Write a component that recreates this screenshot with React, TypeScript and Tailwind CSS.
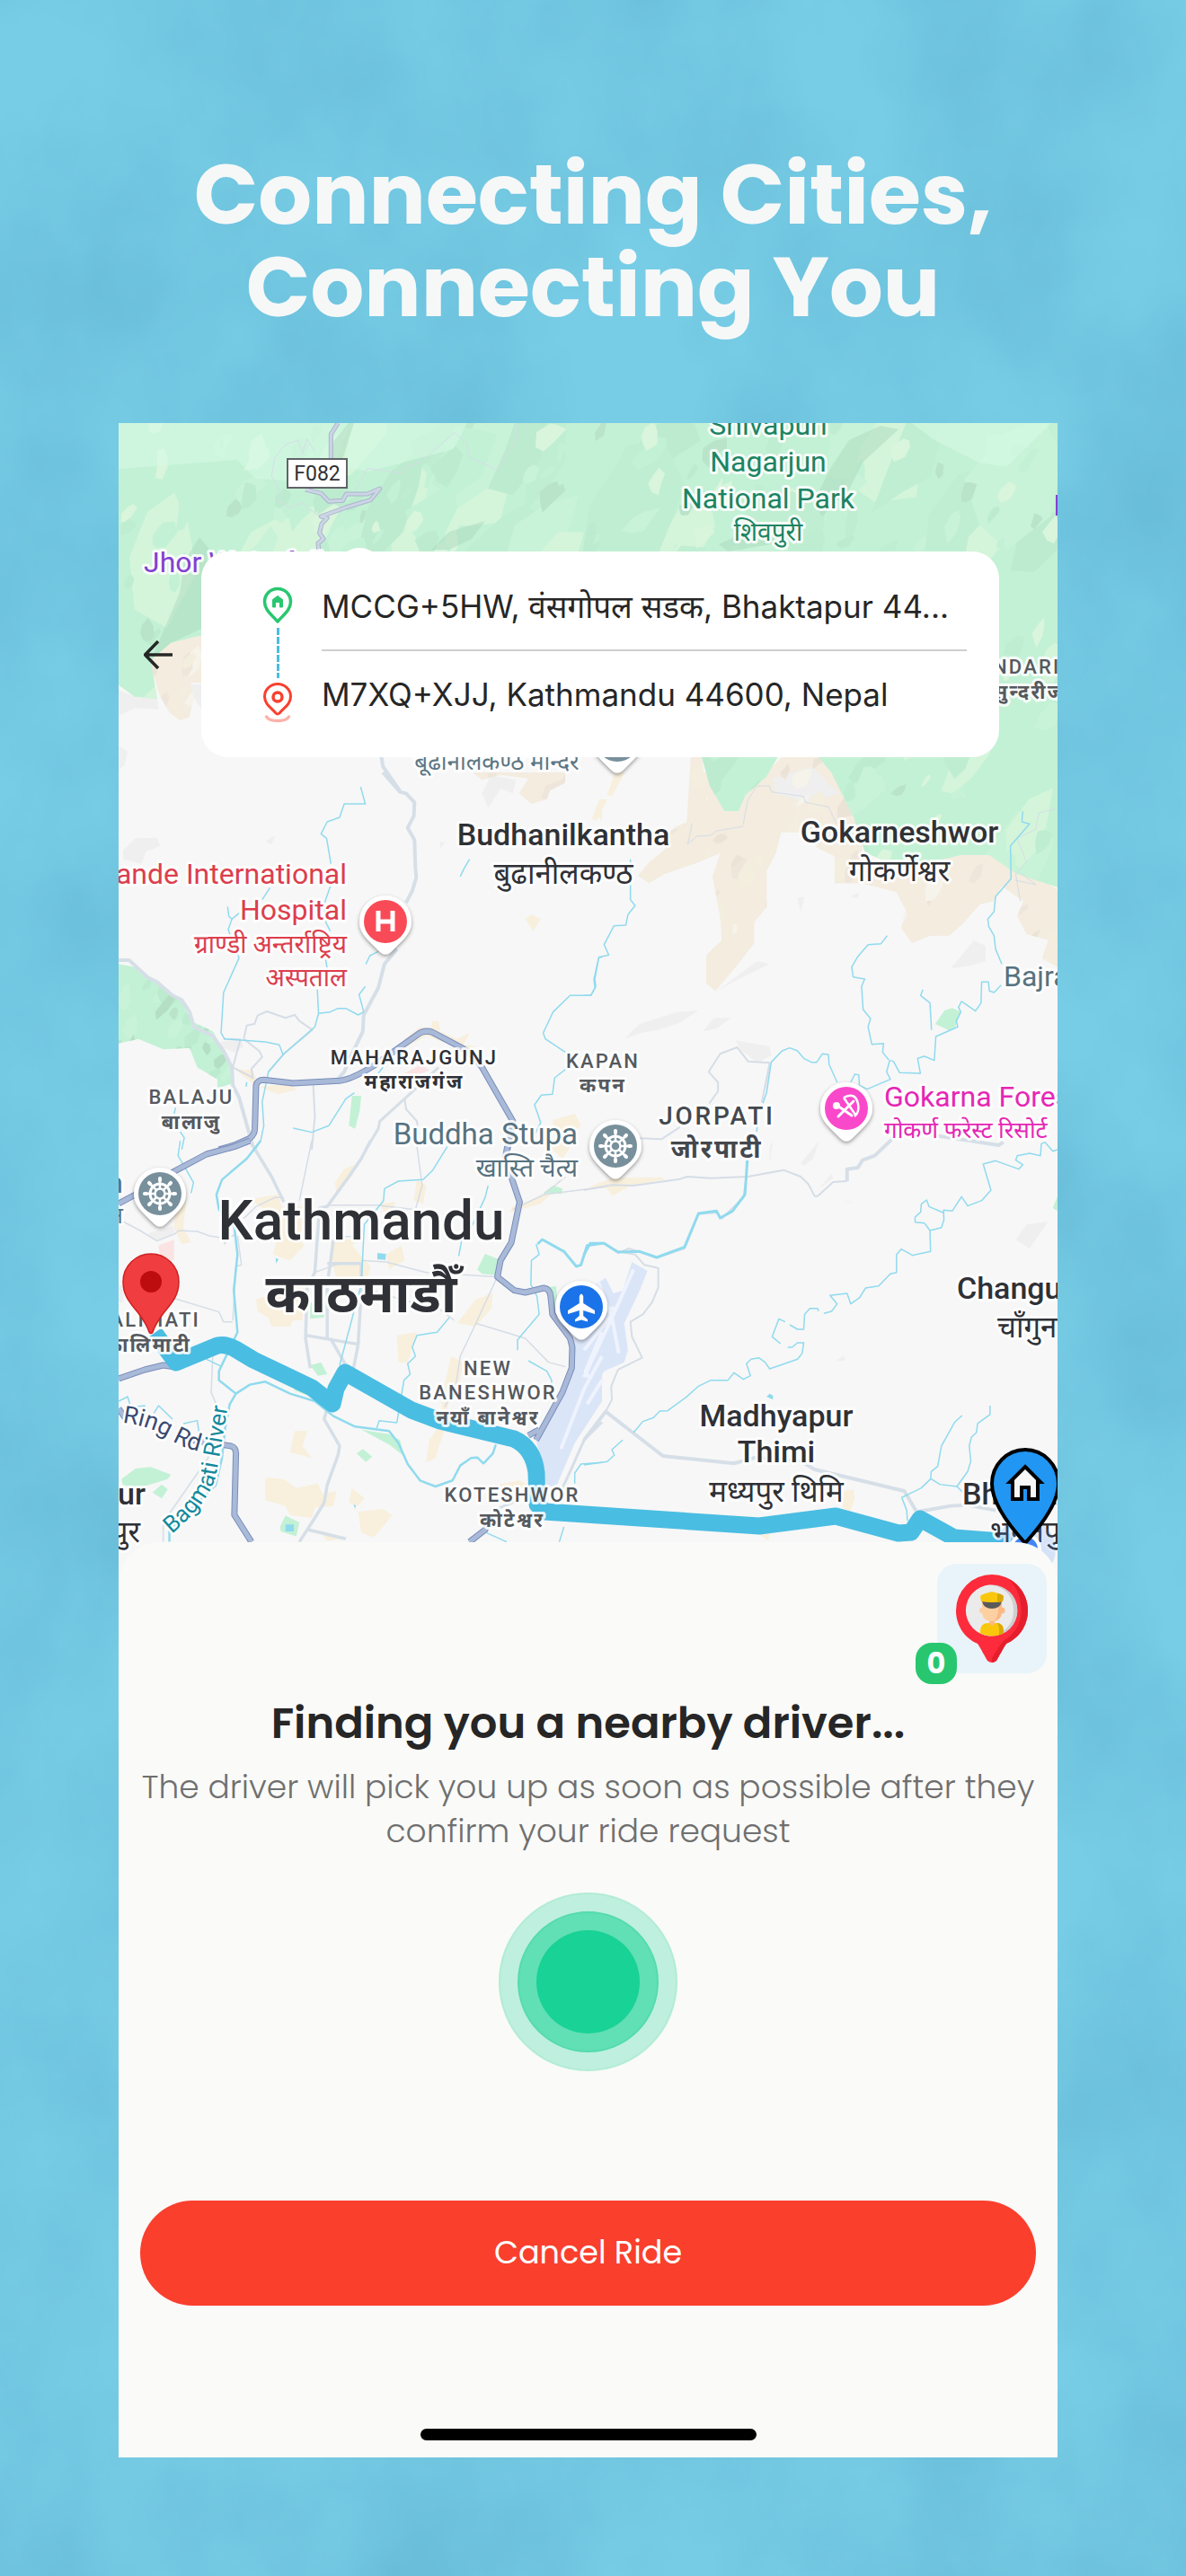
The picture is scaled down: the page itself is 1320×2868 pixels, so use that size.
import React from "react";

type Kind = "road" | "thin" | "river" | "highway" | "green" | "beige" | "tan" | "airport" | "runway" | "grey" | "pink" | "water" | "mint";
type Shape = { t: Tile; k: Kind; d: string; w?: number };
type Tile = "A" | "B" | "C" | "D" | "E" | "F";

/* Every map tile is drawn in its own local units and placed on the canvas. */
const TILES: Record<Tile, string> = {
  A: "translate(130 460) scale(0.3444 0.3333)",
  B: "translate(650 460) scale(0.3444 0.3333)",
  C: "translate(130 860) scale(0.3444 0.3333)",
  D: "translate(650 860) scale(0.3444 0.3333)",
  E: "translate(130 1270) scale(0.3444 0.3333)",
  F: "translate(650 1270) scale(0.3444 0.3333)",
};

const AREAS: Shape[] = [
  { t: "A", k: "tan", d: "M105 830 L165 770 L270 742 L560 760 L560 900 L240 900 L248 950 L235 1015 L205 1027 L170 1000 L140 945Z" },
  { t: "A", k: "grey", d: "M235 905 L274 905 L274 990 L250 950Z M6 925 L70 950 L130 950 L135 990 L60 985 L6 1010Z M6 1110 L35 1130 L25 1175 L6 1190Z" },
  { t: "C", k: "tan", d: "M1150 0 L1450 0 L1448 35 L1400 60 L1390 90 L1340 105 L1300 70 L1330 20 L1240 8 L1180 25Z" },
  { t: "C", k: "grey", d: "M1210 10 L1290 25 L1280 70 L1240 55 L1200 120 L1180 70Z M20 260 L60 220 L130 218 L140 245 L95 265 L80 305 L20 290Z M335 900 L400 890 L410 915 L380 935 L345 920Z M480 230 L512 210 L500 240Z M1045 230 L1060 235 L1045 255Z" },
  { t: "B", k: "tan", d: "M345 1148 L380 1148 L395 1260 L400 1400 L330 1400Z M640 1148 L760 1148 L850 1260 L900 1400 L540 1400 L560 1230Z" },
  { t: "D", k: "tan", d: "M340 0 L600 0 L560 60 L600 70 L640 190 L620 270 L590 330 L590 450 L550 500 L550 570 L510 625 L425 730 L395 705 L395 610 L445 560 L440 480 L415 350 L440 270 L370 300 L260 340 L210 370 L175 345 L210 300 L270 250 L230 235 L300 180 L370 150 L400 90Z" },
  { t: "D", k: "tan", d: "M740 0 L810 0 L900 150 L900 270 L985 320 L1180 270 L1320 270 L1450 340 L1530 390 L1530 650 L1480 620 L1500 560 L1430 540 L1400 480 L1420 430 L1350 380 L1325 430 L1280 440 L1220 510 L1180 545 L1120 545 L1060 570 L1025 520 L1040 460 L1010 400 L900 370 L810 370 L810 280 L750 250 L770 150 L720 80Z" },
  { t: "D", k: "grey", d: "M610 20 L740 -20 L790 40 L830 70 L720 100 L620 70Z M185 870 L130 890 L180 840 L300 800 L370 795 L310 835 L240 860Z M385 865 L420 820 L475 820 L430 855Z M1185 655 L1260 560 L1298 580 L1298 630 L1250 645Z M430 730 L560 630 L600 640 L500 690Z M490 895 L600 915 L605 945 L560 970 L510 930Z M690 420 L712 415 L700 465Z M860 415 L890 400 L885 420Z" },
  { t: "C", k: "green", d: "M6 640 L60 650 L130 700 L180 745 L210 760 L240 830 L310 865 L340 920 L370 985 L370 1040 L325 1055 L325 1025 L260 985 L235 920 L150 925 L70 890 L6 905Z M760 1080 L790 1080 L785 1130 L770 1190 L750 1180Z" },
  { t: "D", k: "green", d: "M1135 840 L1165 795 L1190 787 L1218 800 L1200 850 L1180 862Z" },
  { t: "C", k: "beige", d: "M930 890 L980 850 L1015 855 L1020 830 L1040 830 L1045 865 L1100 890 L1140 870 L1120 910 L1160 915 L1140 930 L1080 910 L1000 880 L940 915Z M380 990 L440 995 L460 1050 L560 1040 L580 1060 L520 1075 L440 1040Z M1320 490 L1340 475 L1370 490 L1345 530Z M1545 140 L1568 85 L1568 160Z M1410 1160 L1480 1140 L1500 1180 L1450 1230 L1410 1200Z" },
  { t: "D", k: "beige", d: "M75 75 L100 0 L130 0 L90 80Z M50 90 L75 90 L40 160 L25 155Z" },
  { t: "C", k: "pink", d: "M930 1005 L985 975 L1010 995 L960 1015Z" },
  { t: "E", k: "pink", d: "M135 350 L185 330 L185 400 L140 395Z" },
  { t: "E", k: "beige", d: "M190 200 L225 190 L215 290 L240 340 L210 345 L185 290Z M430 195 L520 180 L540 240 L600 215 L595 330 L605 350 L560 400 L505 380 L520 320 L490 240Z M735 95 L770 80 L760 120 L710 170 L705 140Z M850 210 L900 205 L890 240 L930 260 L880 270Z M870 380 L920 350 L930 400 L880 430Z M450 530 L610 470 L600 600 L570 600 L560 620 L500 620 L490 590 L455 570Z M690 330 L780 330 L760 350 L820 420 L800 500 L760 480 L720 500 L700 420Z M905 650 L970 640 L940 740 L910 740Z M1160 530 L1215 510 L1210 560 L1160 620 L1100 610Z M1080 720 L1120 740 L1100 850 L1070 880 L1060 960 L1030 1060 L1000 1075 L1010 1000 L1050 940 L1050 860Z M575 970 L615 970 L600 1020 L630 1060 L560 1040Z M480 1125 L540 1130 L580 1160 L650 1145 L665 1180 L710 1170 L700 1220 L640 1225 L630 1260 L560 1250 L545 1220 L480 1200Z M760 1160 L800 1195 L780 1220 L750 1210Z M780 1240 L860 1230 L890 1250 L860 1290 L830 1325 L790 1310Z M1230 1150 L1300 1135 L1330 1150 L1280 1170Z M1280 220 L1410 170 L1370 210 L1270 240Z M650 1300 L740 1330 L680 1335Z M970 130 L1000 150 L990 210 L960 200Z M1390 10 L1480 0 L1440 60Z" },
  { t: "F", k: "beige", d: "M15 155 L90 125 L250 122 L260 130 L150 150 L90 185 L75 160Z M840 1170 L870 1165 L875 1195 L860 1240 L835 1225Z M560 1310 L600 1310 L595 1335 L580 1325Z" },
  { t: "E", k: "green", d: "M1165 430 L1190 378 L1232 395 L1230 450 L1180 445Z M1378 175 L1410 150 L1440 160 L1438 178Z M625 540 L670 535 L670 590 L625 595Z M625 750 L660 740 L680 780 L650 785Z M570 822 L620 835 L640 860 L575 835Z M790 965 L880 980 L915 1000 L930 1055 L880 1015Z M775 1045 L795 1030 L825 1055 L805 1073Z M15 1130 L60 1095 L110 1090 L175 1115 L165 1130 L70 1160 L20 1150Z M115 1175 L145 1148 L165 1165 L145 1195Z M527 1290 L545 1253 L590 1275 L580 1322 L530 1305Z M1390 490 L1420 485 L1425 570 L1408 560Z" },
  { t: "F", k: "green", d: "M1515 225 L1530 185 L1530 235Z" },
  { t: "E", k: "water", d: "M545 1282 L572 1282 L572 1305 L545 1305Z M842 375 L870 378 L868 398 L842 396Z M513 392 L523 395 L515 410Z M765 1215 L773 1218 L770 1230Z" },
  { t: "F", k: "water", d: "M590 855 L600 845 L611 852 L610 865Z" },
  { t: "E", k: "airport", d: "M1355 1000 L1440 840 L1470 760 L1475 670 L1568 470 L1568 870 L1480 1010 L1420 1155 L1390 1155Z" },
  { t: "F", k: "airport", d: "M155 405 L205 435 L180 500 L130 610 L142 700 L130 740 L65 770 L0 880 L-40 700 L-20 640 L75 530 L38 480 L70 458 L95 510 L125 500Z" },
  { t: "E", k: "grey", d: "M100 310 L180 285 L190 310 L130 335Z M6 480 L25 490 L20 540 L6 540Z" },
  { t: "F", k: "grey", d: "M1395 330 L1430 280 L1500 270 L1440 360Z M700 75 L760 0 L740 60 L710 85Z M845 200 L880 210 L850 205Z M760 160 L800 110 L805 125Z M815 735 L840 718 L845 735Z M600 20 L610 0 L600 80Z" },
];

const LINES: Shape[] = [
  { t: "A", k: "thin", w: 1, d: "M660 350 L600 300 L560 315 L515 290 L525 260 L500 210 L510 150 L545 105 L585 90 L600 135 L615 85 L640 130 M770 260 L810 185 L920 200 L935 180 L980 165 L1020 130 L1090 65 L1130 100 L1140 150 L1190 170 L1225 190 L1260 140 L1290 95 L1290 33" },
  { t: "A", k: "road", w: 4, d: "M855 1148 L860 1180 L915 1262" },
  { t: "C", k: "road", w: 4, d: "M860 0 L915 65 L935 70 L962 100 L960 145 L940 185 L962 225 L965 320 L968 350 L955 395 L935 435 M905 590 L865 640 L845 720 L798 810 L795 865 L760 940 L735 1000 L710 1028" },
  { t: "C", k: "road", w: 4, d: "M6 627 L40 627 L100 685 L130 700 L180 745 L210 760 L235 800 L250 850 L310 880 L345 930 L372 985 L375 1045 L395 1085 L440 1250" },
  { t: "C", k: "thin", w: 2, d: "M410 890 L420 845 L445 840 L455 812 L485 798 L545 820 L575 810 L590 830 L632 860 L540 940 L490 1000 M400 890 L375 985 L440 1020 M410 890 L460 930 L470 950 L435 990 L440 1025 M635 1045 L640 1150 L630 1260 M930 1090 L935 1125 L970 1165 L975 1210 M345 890 L400 892" },
  { t: "C", k: "road", w: 3, d: "M1040 985 L930 1090 L850 1165 L845 1190 L805 1260" },
  { t: "D", k: "thin", w: 2, d: "M405 1105 L433 1065 L433 1035 L403 1000 L440 940 L495 918 L530 965 L600 970 L575 1100 L600 980 M180 1222 L250 1225 L310 1185" },
  { t: "D", k: "thin", w: 1, d: "M560 45 L600 45 L605 65 L710 80 L715 100 L790 115 L815 170 M515 175 L520 140 L530 90 L560 45 M515 180 L430 195 L410 210 L365 213 L335 240 L350 170 M1530 120 L1470 135 L1460 190 L1400 220 L1430 300 L1395 340 L1410 430 M1395 360 L1460 375 L1410 335" },
  { t: "E", k: "road", w: 3.5, d: "M430 0 L500 120 L540 205 M820 0 L790 60 L750 120 L680 220 L655 225 L640 440 L615 490 L610 660 L625 760 M700 330 L690 410 L680 480 L680 660 M680 410 L790 410 L790 500 L780 680 L610 650 M780 680 L765 760 M690 660 L740 750 M680 895 L670 930 L720 1020 L715 1050 L680 1150 L670 1210 L640 1260 L590 1340 M620 1300 L740 1330" },
  { t: "E", k: "thin", w: 1.5, d: "M20 270 L75 300 L130 335 L190 310 L200 300 L260 303 L300 318 L340 325 L350 345 L355 325 L380 315 M390 318 L403 415 L385 420 L375 600 M410 260 L450 220 L510 190 L540 190 M630 0 L590 200 M970 20 L987 150 L965 230 L840 215 L680 215 M790 400 L870 405 L1000 440 L1230 455 M700 320 L790 320 M810 490 L850 510 L990 550 L1040 560 L1090 600 M640 440 L720 410 M1225 465 L1165 600 L1110 720 L1095 820 L1060 890 M1160 610 L1320 660 L1395 740 L1450 755 M180 525 L330 572 L345 605 L375 605 M1280 230 L1380 180 L1568 155 M1380 180 L1450 120 M310 720 L305 840 L325 890 L310 945 L295 1060 L150 1275 L150 1340" },
  { t: "E", k: "road", w: 3, d: "M1568 940 L1510 1000 L1465 1105 L1440 1160 M1230 1230 L1300 1200" },
  { t: "F", k: "thin", w: 2, d: "M0 165 L90 148 L160 150 L310 128 L335 120 L410 125 L530 120 L645 98 L700 120 L725 145 L745 185 L755 185 L805 138 L850 135 M525 60 L525 120 L515 190 L445 260 L430 240 L370 245 L325 360 L235 390 L145 360 L110 375 L65 345 M110 370 L165 380 L195 415 L240 425 L240 490 L220 540 L190 580 L150 605 L155 655 L188 725 L110 765 L88 820 L90 865 L70 905" },
  { t: "F", k: "road", w: 4, d: "M850 135 L850 95 L885 90 L900 65 L940 50 L1000 -10 M1090 -25 L1340 15 L1355 5" },
  { t: "F", k: "road", w: 4, d: "M0 1000 L70 905 L255 1053 L485 1078 L555 1058 L700 1070 L745 1098 L1035 1170 L1075 1240 L1185 1220 L1240 1217 L1330 1235" },
  { t: "F", k: "runway", w: 4, d: "M160 430 L100 570 L0 790 M45 470 L90 590 L112 710 M75 560 L105 560 L0 700" },
  { t: "E", k: "runway", w: 4, d: "M1568 720 L1510 830 L1435 1030 M1568 640 L1515 770 L1525 790 M1568 800 L1520 880" },
  { t: "C", k: "river", w: 1.5, d: "M788 48 L803 105 L735 105 L720 150 L680 165 L660 205 L678 220 L692 305 M690 380 L670 440 L675 500 L690 530 M675 625 L680 655 M648 725 L652 805 L690 800 L715 788 L740 788 L780 810 L798 800 L783 742 L803 715 M652 805 L640 850 L540 940 L490 1000 L470 1100 L475 1180 L465 1230 L450 1255 M495 385 L470 425 M358 448 L362 480 L372 490 L395 470 M372 490 L360 525 L395 620 L345 735 L337 870 L348 890 L480 900 L525 910 L538 945 M805 640 L818 612 L845 598 M1140 290 L1120 325 L1110 348 M570 1188 L630 1202 L685 1180 L740 1090 L768 1070 M845 1005 L860 985 M420 1035 L418 1050 M190 1120 L185 1140 M205 1200 L218 1220 L210 1260 M1568 617 L1558 617 L1542 690 L1545 720 L1532 745 L1465 745 L1410 800 L1378 870 L1385 890 L1450 935 M1452 990 L1415 1020 L1408 1075 L1372 1078 L1350 1110 L1370 1170 L1350 1210" },
  { t: "D", k: "river", w: 1.5, d: "M150 290 L150 425 L165 445 L142 475 L135 510 L97 512 L65 575 L80 610 L48 617 L35 690 L38 715 L22 745 L0 745 M1418 130 L1415 165 L1440 172 L1378 245 L1380 355 L1330 415 L1325 465 L1305 490 L1308 515 L1325 545 L1330 590 L1350 640 M1348 710 L1325 735 L1310 730 L1307 700 L1285 700 L1283 770 L1265 797 L1235 775 L1220 765 L1210 785 L1218 800 L1203 830 L1208 850 L1137 882 L1132 962 L1100 948 L1078 955 L1087 1005 L1020 1003 L1000 965 L988 962 L978 1000 L990 1025 L915 1058 L890 1045 L888 1010 L875 1008 L862 1035 M985 960 L965 935 L968 905 L930 908 L918 850 L926 822 L902 792 L897 715 L907 690 L870 683 L865 650 L885 615 L918 575 L960 572 L980 545 M1095 725 L1088 745 L1118 770 L1123 860 M818 1035 L792 975 L790 942 L770 940 L752 968 L735 968 L710 955 L690 930 L665 920 L640 930 L605 968 L590 1070 L578 1105 M560 1180 L558 1200" },
  { t: "E", k: "river", w: 2.5, d: "M465 0 L420 60 L340 130 L322 180 L330 230 L380 290 L390 380 L378 500 L390 640 L330 770 L330 800 L385 845 M170 1340 L170 1300 L320 1150 L340 1060 L350 960 L365 880 L385 845 L430 815 L480 805 L560 845 L640 870 L700 920 L770 955 L880 970 L910 1010 L940 1080 L980 1135 L1030 1155 L1085 1135 L1110 1085 L1145 1060 L1165 1058 L1185 1078 L1215 1045 L1225 1015" },
  { t: "E", k: "river", w: 1.5, d: "M205 0 L198 50 L248 140 L240 175 M1068 20 L1020 100 L990 130 L910 135 L865 160 L862 200 L800 280 L790 480 L720 750 M1200 150 L1190 190 L1150 280 L1115 330 L1105 385 M1075 590 L1035 640 L970 650 L955 690 L965 720 L940 745 L948 780 L928 800 L905 942 L848 935 L840 960 M1355 345 L1365 380 L1340 400 L1338 480 L1358 520 L1365 580 L1295 665 L1295 700 M1330 735 L1390 770 L1405 800 L1405 830 M6 870 L35 855 L45 890 L90 885 L90 910 M120 910 L135 885 L180 930 M215 945 L260 935 L265 970 L295 1000 M290 730 L340 755 M1568 1075 L1500 1080 L1480 1110 L1480 1145 M1195 1310 L1260 1340 M1445 1290 L1430 1340" },
  { t: "E", k: "river", w: 3, d: "M1360 345 L1375 330 L1445 370 L1485 420 L1500 415 L1520 350 L1568 343" },
  { t: "F", k: "river", w: 3, d: "M528 65 L520 180 L480 235 L440 258 L428 235 L370 243 L325 355 L235 390 L180 370 L110 372 L65 343 L20 343 L0 380" },
  { t: "F", k: "river", w: 1.5, d: "M1530 30 L1515 35 L1490 5 L1478 10 L1475 50 L1440 42 L1400 50 L1395 65 L1418 80 L1405 95 L1330 67 L1290 78 L1315 165 L1285 200 L1240 218 L1220 187 L1190 235 L1162 232 L1163 265 L1155 290 L1118 300 L1100 275 L1070 272 L1070 255 L1088 238 L1090 212 L1107 198 L1115 220 L1160 240 M1118 300 L1120 370 L1062 383 L1025 362 L1010 380 L1010 440 L990 445 L952 485 L910 492 L890 525 L862 545 L850 510 L795 517 L818 545 L800 570 L775 577 M758 570 L755 560 L730 560 L713 580 L710 630 L690 630 L665 615 M650 605 L630 595 L608 655 L635 678 M658 690 L672 690 L690 675 L710 675 L705 710 L690 730 L600 762 L585 740 L565 725 L540 730 L525 745 L538 785 L515 797 L485 775 L465 800 L410 800 L370 820 L330 857 L270 902 L245 903 L225 925 L190 938 L160 975 M125 1000 L90 1032 L98 1050 L75 1072 L0 1083 M1222 918 L1198 940 L1155 1020 L1143 1088 L1122 1105 L1120 1130 L1090 1160 L1027 1192 L1043 1235 L1045 1270 M1122 1130 L1150 1148 L1205 1155 L1240 1105 L1250 1070 L1245 1020 L1252 990 L1268 975 L1272 945 L1312 915 L1312 885 M1205 1155 L1225 1175" },
];

const HIGHWAYS: { t: Tile; d: string; pale?: boolean }[] = [
  { t: "A", pale: true, d: "M715 33 L692 70 L692 150 M610 255 L660 268 L685 295 L730 292 L742 270 L810 270 L850 252 L820 290 L740 315 L660 345 L680 350 L662 370 L655 400 L668 420 L650 435 L655 470" },
  { t: "C", d: "M330 1260 L380 1245 L430 1222 Q445 1210 446 1190 L450 1045 Q455 1027 475 1027 L570 1038 L720 1030 Q760 1025 830 980 L980 870 Q1000 860 1020 868 L1115 920 Q1150 940 1180 985 L1280 1165 L1262 1260" },
  { t: "E", d: "M6 210 L60 180 L190 100 L290 45 L380 20 L430 0 M1262 20 L1255 60 L1302 205 L1275 340 L1240 400 L1230 455 L1285 500 L1320 507 L1380 492 Q1400 495 1402 520 L1408 580 L1465 660 L1472 690 L1470 760 L1440 840 L1355 1000 M1330 985 L1365 965 M6 795 L90 765 L150 750 L180 755 L210 740 M6 895 L30 930 M240 1000 L370 1020 Q385 1025 385 1045 L380 1250 L435 1340 M1140 1340 L1190 1300 L1210 1250" },
];

const AREA_FILL: Record<Kind, string> = {
  green: "#c3f1d5", mint: "#d3f8e3", beige: "#f8efdc", tan: "#f3ecdf", airport: "#dbe5f8", grey: "#efefef", pink: "#fbe3e3", water: "#90daee",
  road: "none", thin: "none", river: "none", highway: "none", runway: "none",
};
const LINE_COLOR: Record<string, string> = { road: "#d6dfe7", thin: "#d6dde6", river: "#90daee", runway: "#eef3fd" };

const FOREST =
  "M132 471 L1177 471 L1177 988 L1132 973 L1101 952 L1070 952 L1008 967 L963 950 L950 910 L925 860 L905 835 L870 835 L853 865 L830 885 L822 903 L806 903 L790 875 L781 843 L700 800 L400 740 L222 708 L190 716 L168 735 L175 778 L150 776 L132 763Z";

/* Pseudo-random relief: slanted polygons that read as hill shading. */
function relief(seed: number, count: number, x: number, y: number, w: number, h: number, size: number, colors: string[]) {
  let s = seed;
  const rnd = () => {
    s = (s * 1664525 + 1013904223) % 4294967296;
    return s / 4294967296;
  };
  return Array.from({ length: count }, () => {
    const cx = x + rnd() * w;
    const cy = y + rnd() * h;
    const len = size * (0.4 + rnd());
    const wid = len * (0.3 + rnd() * 0.4);
    const a = -1.05 + (rnd() - 0.5) * 0.8;
    const pts = Array.from({ length: 7 }, (_, i) => {
      const th = (i / 7) * Math.PI * 2;
      const r = 0.55 + rnd() * 0.6;
      const px = Math.cos(th) * len * r;
      const py = Math.sin(th) * wid * r;
      return `${(cx + px * Math.cos(a) - py * Math.sin(a)).toFixed(1)},${(cy + px * Math.sin(a) + py * Math.cos(a)).toFixed(1)}`;
    });
    return { points: pts.join(" "), fill: colors[Math.floor(rnd() * colors.length)] };
  });
}

const FOREST_RELIEF = [
  ...relief(11, 110, 132, 471, 1045, 500, 66, ["#c0eed2", "#c8f3d8", "#c3f1d5", "#d4f5da", "#bdebcf"]),
  ...relief(5, 360, 132, 471, 1045, 520, 19, ["#bfedd1", "#c9f3d8", "#c3f1d5", "#d9f5db", "#bdebcf", "#b9e4ca", "#c3f1d5", "#c3f1d5"]),
];
const PARK_RELIEF = relief(21, 40, 132, 1070, 130, 140, 16, ["#bdebcf", "#c9f3d8", "#b5dfc5", "#b9e4c9"]);
const TAN_RELIEF = relief(8, 420, 132, 700, 1045, 430, 15, ["#f6f3ea", "#eee6da", "#ebe3d6", "#f4eedf"]);

function Poi({ x, y, color, children }: { x: number; y: number; color: string; children?: React.ReactNode }) {
  return (
    <g transform={`translate(${x} ${y})`}>
      <path filter="url(#pin-shadow)" fill="#fff" d="M0 -29 A29 29 0 0 1 29 0 C29 12 22 18 7 33 Q0 40 -7 33 C-22 18 -29 12 -29 0 A29 29 0 0 1 0 -29Z" />
      <circle r="24" fill={color} />
      {children}
    </g>
  );
}

function Wheel() {
  return (
    <g stroke="#fff" fill="none">
      <circle r="11" strokeWidth="3" />
      <circle r="5.500" strokeWidth="2.500" />
      {[0, 45, 90, 135, 180, 225, 270, 315].map((a) => (
        <g key={a} transform={`rotate(${a})`}>
          <path d="M0 -5 V-16" strokeWidth="2.500" />
          <path d="M0 -15 V-17" strokeWidth="4" strokeLinecap="round" />
        </g>
      ))}
    </g>
  );
}

type LabelProps = { x: number; y: number; size: number; color: string; anchor?: "start" | "middle" | "end"; weight?: number; caps?: boolean; children: string };
function Label({ x, y, size, color, anchor = "middle", weight = 400, caps, children }: LabelProps) {
  return (
    <text
      x={x}
      y={y}
      fontSize={size}
      fill={color}
      textAnchor={anchor}
      fontWeight={weight}
      stroke="#fff"
      strokeOpacity="0.85"
      strokeWidth="6"
      strokeLinejoin="round"
      paintOrder="stroke"
      className={caps ? "tracking-widest" : ""}
    >
      {children}
    </text>
  );
}

function CityMap() {
  const ink = "#2f3136";
  const soft = "#55595e";
  return (
    <svg
      role="img"
      aria-label="Map of Kathmandu with the route of the ride"
      viewBox="132 471 1045 1292"
      preserveAspectRatio="xMidYMin slice"
      className="absolute inset-0 h-full w-full font-['Roboto','Noto_Sans_Devanagari','Noto_Sans',sans-serif]"
    >
      <defs>
        <clipPath id="forest"><path d={FOREST} /></clipPath>
        <clipPath id="park">
          <path transform={TILES.C} d={AREAS[8].d} />
        </clipPath>
        <clipPath id="tan">
          {AREAS.filter((a) => a.k === "tan").map((a) => <path key={a.d} transform={TILES[a.t]} d={a.d} />)}
        </clipPath>
        <filter id="pin-shadow" x="-30%" y="-30%" width="160%" height="170%">
          <feDropShadow dx="0" dy="2" stdDeviation="2" floodColor="#000" floodOpacity="0.4" />
        </filter>
        <path id="ring-road" d="M136 1584 Q172 1588 195 1606 Q215 1617 240 1618" />
        <path id="bagmati" d="M191 1708 Q234 1672 241 1640 Q248 1600 256 1550" />
      </defs>
      <rect x="132" y="471" width="1045" height="1292" fill="#f7f7f7" />
      {AREAS.map((a) => <path key={a.d} transform={TILES[a.t]} d={a.d} fill={AREA_FILL[a.k]} />)}
      <g clipPath="url(#tan)">{TAN_RELIEF.map((p) => <polygon key={p.points} {...p} />)}</g>
      <g clipPath="url(#park)">{PARK_RELIEF.map((p) => <polygon key={p.points} {...p} />)}</g>
      <g clipPath="url(#forest)">
        <path d={FOREST} fill="#c3f1d5" />
        {FOREST_RELIEF.map((p) => <polygon key={p.points} {...p} />)}
        <path fill="#d5fae6" opacity="0.6" d="M132 471 H390 L372 520 L320 535 L285 533 L264 512 L132 522Z M1015 471 H1170 L1120 520 L1090 515 L1040 490Z M390 471 H520 L505 500 L410 525 L385 520Z" />
        <path fill="#a9d6bb" opacity="0.45" d="M168 735 L200 660 L205 625 L222 598 L232 610 L228 640 L224 700 L190 716Z M905 560 L925 520 L945 490 L980 474 L1000 478 L960 515 L945 545 L915 575Z M480 612 L500 592 L540 580 L525 600 L500 612Z M362 530 L372 490 L388 471 L394 471 L380 515 L370 535Z M800 606 L830 592 L880 580 L870 604 L810 614Z" />
      </g>
      {LINES.map((l) => (
        <path
          key={l.d}
          transform={TILES[l.t]}
          d={l.d}
          fill="none"
          stroke={LINE_COLOR[l.k]}
          strokeWidth={l.w}
          strokeLinejoin="round"
          vectorEffect="non-scaling-stroke"
        />
      ))}
      {HIGHWAYS.map((h) => (
        <g key={h.d} transform={TILES[h.t]} fill="none" strokeLinejoin="round">
          <path d={h.d} stroke={h.pale ? "#aab5ce" : "#7a8dbb"} strokeWidth={h.pale ? 5 : 7} vectorEffect="non-scaling-stroke" />
          <path d={h.d} stroke={h.pale ? "#ccd5e4" : "#a9bad8"} strokeWidth={h.pale ? 3 : 5} vectorEffect="non-scaling-stroke" />
        </g>
      ))}
      <path
        fill="none"
        stroke="#4abde2"
        strokeWidth="19"
        strokeLinejoin="round"
        d="M172 1484 L196 1517 L242 1498 Q252 1496 262 1502 L282 1514 L347 1545 L370 1563 L374 1546 L384 1528 L458 1570 L490 1582 L572 1602 Q594 1612 597 1640 L598 1675 L606 1683 L845 1699 L930 1688 L1000 1707 L1014 1706 L1024 1691 L1062 1712 L1140 1718"
      />

      <g>
        <rect x="320" y="511" width="66" height="32" fill="#fff" stroke="#606468" strokeWidth="2" />
        <text x="353" y="535" fontSize="23" textAnchor="middle" fill="#2f3136">F082</text>
      </g>

      <Label x={855} y={484} size={32} color="#1c8463">Shivapuri</Label>
      <Label x={855} y={525} size={32} color="#1c8463">Nagarjun</Label>
      <Label x={855} y={566} size={32} color="#1c8463">National Park</Label>
      <Label x={855} y={602} size={28} color="#1c8463">शिवपुरी</Label>
      <Label x={160} y={637} size={32} color="#8440d0" anchor="start">Jhor Waterfall</Label>
      <rect x="1175" y="551" width="4" height="23" fill="#8440d0" />
      <circle cx="400" cy="638" r="28" fill="#fff" />
      <Label x={1105} y={750} size={22} color={soft} anchor="start" weight={500} caps>NDARIJAL</Label>
      <Label x={1105} y={778} size={22} color={soft} anchor="start" weight={700} caps>सुन्दरीजल</Label>
      <Label x={553} y={857} size={26} color="#5c7684">बूढानीलकण्ठ मन्दिर</Label>
      <Poi x={687} y={824} color="#78909c" />

      <Label x={627} y={941} size={34} color={ink} weight={500}>Budhanilkantha</Label>
      <Label x={627} y={984} size={33} color={ink}>बुढानीलकण्ठ</Label>
      <Label x={1001} y={938} size={34} color={ink} weight={500}>Gokarneshwor</Label>
      <Label x={1001} y={981} size={33} color={ink}>गोकर्णेश्वर</Label>
      <Label x={386} y={984} size={32} color="#dc3e4c" anchor="end">Grande International</Label>
      <Label x={386} y={1024} size={32} color="#dc3e4c" anchor="end">Hospital</Label>
      <Label x={386} y={1061} size={28} color="#dc3e4c" anchor="end">ग्राण्डी अन्तर्राष्ट्रिय</Label>
      <Label x={386} y={1098} size={28} color="#dc3e4c" anchor="end">अस्पताल</Label>
      <Poi x={429} y={1026} color="#f94b57">
        <path d="M-8 -12 V11 M8 -12 V11 M-8 0 H8" stroke="#fff" strokeWidth="5" />
      </Poi>
      <Label x={1117} y={1098} size={32} color="#57727f" anchor="start">Bajrayogini</Label>

      <Label x={461} y={1185} size={22} color={ink} weight={500} caps>MAHARAJGUNJ</Label>
      <Label x={461} y={1212} size={22} color={ink} weight={700} caps>महाराजगंज</Label>
      <Label x={213} y={1229} size={22} color={soft} weight={500} caps>BALAJU</Label>
      <Label x={213} y={1257} size={22} color={soft} weight={700} caps>बालाजु</Label>
      <Label x={671} y={1189} size={22} color={soft} weight={500} caps>KAPAN</Label>
      <Label x={671} y={1216} size={22} color={soft} weight={700} caps>कपन</Label>
      <Label x={798} y={1252} size={28} color="#44484d" weight={500} caps>JORPATI</Label>
      <Label x={798} y={1289} size={28} color="#44484d" weight={700} caps>जोरपाटी</Label>
      <Label x={643} y={1274} size={33} color="#57727f" anchor="end">Buddha Stupa</Label>
      <Label x={643} y={1310} size={28} color="#57727f" anchor="end">खास्ति चैत्य</Label>
      <Poi x={685} y={1276} color="#78909c"><Wheel /></Poi>
      <Label x={984} y={1232} size={32} color="#e527b5" anchor="start">Gokarna Forest Resort</Label>
      <Label x={984} y={1267} size={26} color="#e527b5" anchor="start">गोकर्ण फरेस्ट रिसोर्ट</Label>
      <Poi x={942} y={1234} color="#fa48cb">
        <g stroke="#fff" strokeWidth="3" fill="none">
          <circle cx="-11" cy="-3" r="4" fill="#fff" stroke="none" />
          <path d="M-9 9 L8 -8 M-7 -1 L6 8" strokeLinecap="round" />
          <path d="M-3 -12 Q10 -19 13 -5 Q15 4 9 9 M-3 -12 L10 7" strokeWidth="2.500" />
        </g>
      </Poi>
      <Label x={137} y={1328} size={32} color="#57727f" anchor="end">n</Label>
      <Label x={137} y={1362} size={26} color="#57727f" anchor="end">न</Label>
      <Poi x={178} y={1329} color="#78909c"><Wheel /></Poi>

      <Label x={402} y={1380} size={62} color={ink} weight={500}>Kathmandu</Label>
      <Label x={402} y={1461} size={60} color={ink} weight={700}>काठमाडौँ</Label>
      <Poi x={647} y={1455} color="#1a73e8">
        <path fill="#fff" d="M-2.200 -12 Q0 -17 2.200 -12 V-4 L15 4 V8 L2.200 4 V10 L7 14 V16.500 L0 14.500 L-7 16.500 V14 L-2.200 10 V4 L-15 8 V4 L-2.200 -4Z" />
      </Poi>
      <Label x={1065} y={1446} size={34} color={ink} anchor="start" weight={500}>Changunarayan</Label>
      <Label x={1110} y={1489} size={33} color={ink} anchor="start">चाँगुनारायण</Label>
      <Label x={223} y={1477} size={22} color={soft} anchor="end" weight={500} caps>KALIMATI</Label>
      <Label x={213} y={1505} size={22} color={soft} anchor="end" weight={700} caps>कालिमाटी</Label>
      <Label x={543} y={1531} size={22} color={soft} weight={500} caps>NEW</Label>
      <Label x={543} y={1558} size={22} color={soft} weight={500} caps>BANESHWOR</Label>
      <Label x={543} y={1586} size={22} color={soft} weight={700} caps>नयाँ बानेश्वर</Label>
      <Label x={570} y={1672} size={22} color={soft} weight={500} caps>KOTESHWOR</Label>
      <Label x={570} y={1700} size={22} color={soft} weight={700} caps>कोटेश्वर</Label>
      <Label x={864} y={1588} size={34} color={ink} weight={500}>Madhyapur</Label>
      <Label x={864} y={1628} size={34} color={ink} weight={500}>Thimi</Label>
      <Label x={864} y={1672} size={33} color={ink}>मध्यपुर थिमि</Label>
      <Label x={162} y={1675} size={34} color={ink} anchor="end" weight={500}>Kirtipur</Label>
      <Label x={156} y={1717} size={33} color={ink} anchor="end">कीर्तिपुर</Label>
      <Label x={1071} y={1675} size={34} color={ink} anchor="start" weight={500}>Bhaktapur</Label>
      <Label x={1102} y={1717} size={33} color={ink} anchor="start">भक्तपुर</Label>
      <g stroke="#fff" strokeWidth="5" paintOrder="stroke" strokeLinejoin="round">
        <text fontSize="27" fill="#3a4a70"><textPath href="#ring-road">Ring Rd</textPath></text>
        <text fontSize="26" fill="#13899c"><textPath href="#bagmati">Bagmati River</textPath></text>
      </g>

      <circle cx="1141" cy="1725" r="34" fill="#4285f4" opacity="0.18" />
      <circle cx="1141" cy="1725" r="16" fill="#4285f4" stroke="#fff" strokeWidth="4" />
      <g>
        <path fill="#f03d3f" stroke="#cf2022" strokeWidth="1.500" d="M168 1396 A31 31 0 0 1 199 1427 C199 1442 192 1450 182 1462 Q173 1474 170 1483 Q168 1486 166 1483 Q163 1474 154 1462 C144 1450 137 1442 137 1427 A31 31 0 0 1 168 1396Z" />
        <circle cx="168" cy="1427" r="12" fill="#be0d0f" />
      </g>
      <g>
        <path fill="#2196f3" stroke="#000" strokeWidth="4" d="M1141 1614 A37 38 0 0 1 1178 1652 C1178 1672 1162 1695 1141 1718 C1120 1695 1104 1672 1104 1652 A37 38 0 0 1 1141 1614Z" />
        <path fill="#f7f7f7" stroke="#000" strokeWidth="4" d="M1141 1633 L1158 1650 H1155 V1669 H1145 V1656 H1137 V1669 H1127 V1650 H1124Z" />
      </g>
    </svg>
  );
}

function PickupIcon() {
  return (
    <svg viewBox="0 0 34 42" className="h-[42px] w-[34px]" aria-hidden="true">
      <path d="M17 2.500 C8.500 2.500 2.500 9 2.500 17 C2.500 26 10 31 17 39 C24 31 31.500 26 31.500 17 C31.500 9 25.500 2.500 17 2.500Z" fill="none" stroke="#28c76f" strokeWidth="3.500" strokeLinejoin="round" />
      <path d="M11.500 23 V14.500 L17 10.500 L22.500 14.500 V23 H19.500 V17.500 H14.500 V23Z" fill="#28c76f" stroke="#28c76f" strokeWidth="1" />
    </svg>
  );
}

function DropIcon() {
  return (
    <svg viewBox="0 0 34 46" className="h-[46px] w-[34px]" aria-hidden="true">
      <path d="M17 2.500 C9 2.500 2.500 9 2.500 16.500 C2.500 25 10 29 15 35 Q17 37 19 35 C24 29 31.500 25 31.500 16.500 C31.500 9 25 2.500 17 2.500Z" fill="none" stroke="#f9402e" strokeWidth="3" />
      <circle cx="17" cy="17" r="5" fill="none" stroke="#f9402e" strokeWidth="3.500" />
      <path d="M4.500 39 Q7 43.500 17 43.500 Q27 43.500 29.500 39" fill="none" stroke="#fdb1ab" strokeWidth="3.500" strokeLinecap="round" />
    </svg>
  );
}

function DriverIcon() {
  return (
    <svg viewBox="0 0 82 100" className="h-[100px] w-[82px]" aria-hidden="true">
      <defs>
        <clipPath id="face"><circle cx="41" cy="41" r="28.500" /></clipPath>
      </defs>
      <path d="M41 1 A40 40 0 0 1 81 41 C81 58 71 72 57 78 C53 84 49 92 46 97 Q41 101 36 97 C33 92 29 84 25 78 C11 72 1 58 1 41 A40 40 0 0 1 41 1Z" fill="#fd2b3b" />
      <path d="M58 5 C73 12 81 26 81 41 C81 58 71 72 57 78 C53 84 49 92 46 97 Q43 99 41 99 V94 C46 86 52 76 55 74 C68 66 76 52 73 34 C71 20 65 10 58 5Z" fill="#e51e2d" />
      <circle cx="41" cy="41" r="28.500" fill="#cfcfcf" />
      <path d="M38 12.600 A28.500 28.500 0 0 0 38 69.400 C52 68 65 59 65 41 C65 24 54 14 38 12.600Z" fill="#ebebeb" />
      <g clipPath="url(#face)">
        <path d="M28 72 V64 Q28 55 37 55 H46 Q54 55 54 64 V72Z" fill="#fac70c" />
        <path d="M46 55 Q54 55 54 64 V72 H49 V62 Q49 57 46 55Z" fill="#d9a908" />
        <path d="M38 50 H44 V56 Q41 59 38 56Z" fill="#fbb985" />
      </g>
      <circle cx="30" cy="41" r="3" fill="#fdcf9d" />
      <circle cx="52" cy="41" r="3.500" fill="#fbb985" />
      <path d="M30 30 H52 V42 Q52 53 41 53 Q30 53 30 42Z" fill="#fdd0a2" />
      <path d="M48 32 H52 V42 Q52 51 44 53 Q49 47 48 32Z" fill="#fbb985" />
      <path d="M30 31 H52 Q50 39 41 39 Q32 39 30 31Z" fill="#5a5a5a" />
      <path d="M28 26 Q28 24 31 23 L39 20.500 Q41 20 43 20.500 L51 23 Q54 24 54 26 L53 31 Q41 33 29 31Z" fill="#fac70c" />
      <path d="M47 22 L51 23 Q54 24 54 26 L53 31 L47 32Z" fill="#d9a908" />
    </svg>
  );
}

export default function App() {
  return (
    <main className="relative isolate flex min-h-screen flex-col overflow-hidden bg-[#78cde6] pb-[132px] font-['Poppins','Inter',sans-serif]">
      <svg className="absolute inset-0 -z-10 h-full w-full" aria-hidden="true">
        <filter id="paper" x="0" y="0" width="100%" height="100%" colorInterpolationFilters="sRGB">
          <feTurbulence type="fractalNoise" baseFrequency="0.005 0.004" numOctaves="7" seed="9" />
          <feColorMatrix values="0 0 0 0 0.36  0 0 0 0 0.69  0 0 0 0 0.81  0.9 0 0 0 -0.24" />
        </filter>
        <rect width="100%" height="100%" filter="url(#paper)" />
      </svg>

      <h1 className="pt-[165px] pb-[100px] text-center text-[94px] leading-[103px] font-bold text-[#f6f8f8]">
        Connecting Cities,
        <br />
        Connecting You
      </h1>

      <section className="mr-[143px] ml-[132px] flex flex-col bg-[#fafaf8]">
        <div className="relative h-[1292px] overflow-hidden">
          <CityMap />
          <div className="relative flex items-center gap-8 pt-[143px] pr-[65px] pl-7">
            <button type="button" aria-label="Back" className="flex-none">
              <svg viewBox="0 0 32 32" className="size-8" fill="none" stroke="#262626" strokeWidth="3.500" aria-hidden="true">
                <path d="M32 16 H2 M16 1 L1.500 16 L16 31" />
              </svg>
            </button>
            <div className="flex h-[229px] min-w-0 flex-1 items-center gap-8 rounded-[30px] bg-white pr-9 pl-[68px] text-[35px] leading-[48px] text-[#262626]">
              <div className="flex flex-none flex-col items-center gap-1">
                <PickupIcon />
                <span className="h-[56px] w-[3px] bg-[repeating-linear-gradient(to_bottom,#4abde2_0_8px,transparent_8px_10px)]" />
                <DropIcon />
              </div>
              <div className="flex min-w-0 flex-1 flex-col gap-6 pb-[10px] font-['Inter','Noto_Sans_Devanagari',sans-serif]">
                <p className="h-12 truncate">MCCG+5HW, वंसगोपल सडक, Bhaktapur 44...</p>
                <hr className="border-t-2 border-[#cfcfcf]" />
                <p className="h-12 truncate">M7XQ+XJJ, Kathmandu 44600, Nepal</p>
              </div>
            </div>
          </div>
        </div>

        <div className="relative -mt-[46px] flex flex-col rounded-t-[46px] bg-[#fafaf8] px-6 pt-6 pb-[19px]">
          <div className="relative -mr-3 flex size-[122px] items-center justify-center self-end rounded-[22px] bg-[#e8f4f9]">
            <DriverIcon />
            <span className="absolute -bottom-3 -left-6 flex size-[46px] items-center justify-center rounded-[18px] bg-[#28c76f] text-[32px] font-bold text-white">0</span>
          </div>
          <h2 className="mt-[22px] text-center text-[48px] leading-[68px] font-semibold text-[#262626]">Finding you a nearby driver...</h2>
          <p className="-mx-2 mt-3 text-center text-[36px] leading-[49px] font-light text-[#6f6f6f]">
            The driver will pick you up as soon as possible after they confirm your ride request
          </p>
          <div className="mt-11 flex size-[199px] items-center justify-center self-center rounded-full border-2 border-[#b2ecd6] bg-[#beefdf]">
            <div className="flex size-[157px] items-center justify-center rounded-full border-2 border-[#55dbae] bg-[#61dfb5]">
              <div className="size-[115px] rounded-full bg-[#19d295]" />
            </div>
          </div>
          <button type="button" className="mt-36 h-[117px] rounded-full bg-[#fa3f2d] text-[35px] text-white">
            Cancel Ride
          </button>
          <div className="mt-[137px] h-[13px] w-[374px] self-center rounded-full bg-black" />
        </div>
      </section>
    </main>
  );
}
